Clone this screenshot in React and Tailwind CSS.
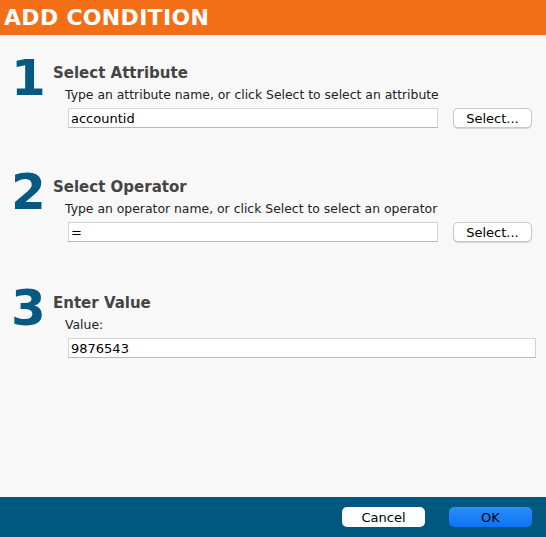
import React from "react";

const font = { fontFamily: '"DejaVu Sans", Verdana, sans-serif' };

const inputCls =
  "h-[20px] bg-white border border-[#d4d4d4] border-b-[#b8b8b8] px-[2px] text-[13px] text-black leading-[18px] outline-none";

const btnCls =
  "h-[20px] rounded-[5px] bg-white border border-[#c8c8c8] shadow-[0_1px_1px_rgba(0,0,0,0.15)] text-[13px] text-black leading-none";

function Step({ num, title, label, value, withSelect, extraTop }) {
  return (
    <div className={"flex" + (extraTop ? " mt-[2px]" : "")}>
      <div className="w-[53px] pl-[11px] text-[50px] font-bold leading-none text-[#065a82]">
        {num}
      </div>
      <div className="flex-1 pt-[11px]">
        <div className="text-[15px] font-bold leading-[18px] text-[#444]">{title}</div>
        <div className="mt-[5px] pl-[12px] text-[12.4px] leading-[15px] text-[#222]">{label}</div>
        <div className="mt-[6px] pl-[15px] flex items-center pr-[10px]">
          <input
            readOnly
            value={value}
            className={inputCls + (withSelect ? " w-[370px]" : " w-[468px]")}
          />
          {withSelect && <button className={btnCls + " ml-[15px] w-[79px]"}>Select...</button>}
        </div>
      </div>
    </div>
  );
}

export default function App() {
  return (
    <div className="w-[546px] h-[537px] flex flex-col bg-[#f8f8f8]" style={font}>
      <div className="h-[35px] bg-[#f26f17] px-[4px] flex items-center">
        <span className="text-[22px] font-bold text-white tracking-[0.3px]">ADD CONDITION</span>
      </div>

      <div className="flex-1 flex flex-col pt-[18px] gap-[39px]">
        <Step
          num="1"
          title="Select Attribute"
          label="Type an attribute name, or click Select to select an attribute"
          value="accountid"
          withSelect
        />
        <Step
          num="2"
          title="Select Operator"
          label="Type an operator name, or click Select to select an operator"
          value="="
          withSelect
        />
        <Step num="3" title="Enter Value" label="Value:" value="9876543" extraTop />
      </div>

      <div className="h-[40px] bg-[#02577e] flex items-center justify-end pr-[14px] gap-[24px]">
        <button className="w-[83px] h-[20px] rounded-[5px] bg-white text-[13px] text-black leading-none">
          Cancel
        </button>
        <button className="w-[83px] h-[20px] rounded-[5px] bg-gradient-to-b from-[#2a8efc] to-[#0a74f5] text-[13px] text-black leading-none">
          OK
        </button>
      </div>
    </div>
  );
}
